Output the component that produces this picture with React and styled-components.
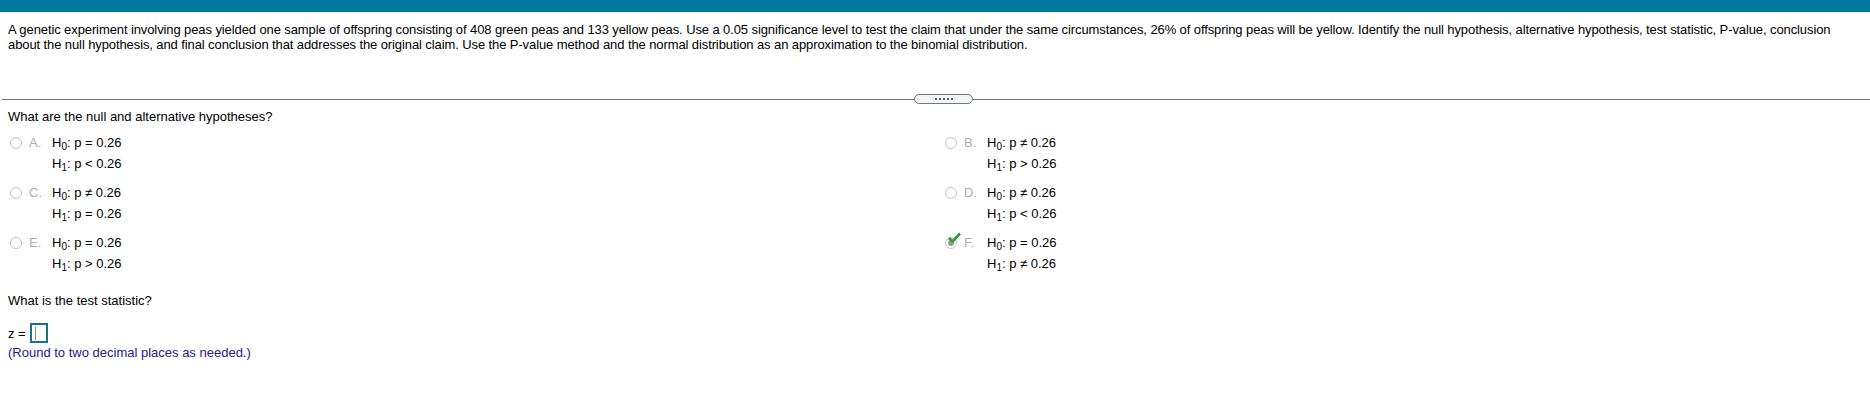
import React from "react";
import styled, { createGlobalStyle } from "styled-components";

const GlobalStyle = createGlobalStyle`
  body {
    margin: 0;
    background: #fff;
    font-family: "Liberation Sans", Arial, sans-serif;
    font-size: 13px;
    color: #000;
  }
`;

const Page = styled.div`
  width: 1870px;
  height: 416px;
  overflow: hidden;
`;

const TopBar = styled.div`
  height: 12px;
  background: #00789b;
`;

const Prompt = styled.p`
  margin: 0;
  padding: 10px 8px 0;
  line-height: 15px;
  letter-spacing: -0.1px;
`;

const DividerRow = styled.div`
  display: flex;
  align-items: center;
  height: 10px;
  margin-top: 42px;
  padding-left: 2px;
`;

const Line = styled.div`
  height: 1px;
  background: #6e7580;
  flex: ${(p) => (p.$grow ? 1 : "none")};
  width: ${(p) => (p.$w ? `${p.$w}px` : "auto")};
`;

const Pill = styled.button`
  width: 59px;
  height: 10px;
  padding: 0;
  border: 1px solid #6e7580;
  border-radius: 5px;
  background: #f2f4f7;
  display: flex;
  align-items: center;
  justify-content: center;
  gap: 2px;
`;

const Dot = styled.span`
  width: 2px;
  height: 2px;
  background: #5a616b;
`;

const Question = styled.div`
  padding-left: 8px;
  line-height: 15px;
  margin-top: ${(p) => p.$mt}px;
`;

const OptionsGrid = styled.div`
  display: grid;
  grid-template-columns: 935px 935px;
  row-gap: 8px;
  margin-top: 8px;
`;

const Option = styled.div`
  display: flex;
  align-items: flex-start;
  padding-left: 10px;
`;

const RadioWrap = styled.div`
  position: relative;
  width: 12px;
  height: 12px;
  margin-top: 5px;
  margin-right: 7px;
`;

const Radio = styled.div`
  width: 12px;
  height: 12px;
  box-sizing: border-box;
  border-radius: 50%;
  border: 1px solid #c3c3c3;
  background: #fff;
  display: flex;
  align-items: center;
  justify-content: center;

  &::after {
    content: "";
    display: ${(p) => (p.$checked ? "block" : "none")};
    width: 6px;
    height: 6px;
    border-radius: 50%;
    background: #9a9a9a;
  }
`;

const Check = styled.svg`
  position: absolute;
  left: 3px;
  top: -5px;
  width: 13px;
  height: 11px;
`;

const Letter = styled.span`
  width: 23px;
  line-height: 21px;
  color: #aeaeae;
`;

const Lines = styled.div`
  display: flex;
  flex-direction: column;
`;

const HLine = styled.div`
  line-height: 21px;
  height: 21px;
  white-space: nowrap;
`;

const Sub = styled.sub`
  font-size: 10px;
  vertical-align: -3px;
  line-height: 0;
`;

const AnswerRow = styled.div`
  display: flex;
  align-items: center;
  padding-left: 8px;
  margin-top: 15px;
  height: 20px;
`;

const InputBox = styled.div`
  width: 18px;
  height: 20px;
  box-sizing: border-box;
  margin-left: 4px;
  border: 2px solid #1f6f8b;
  display: flex;
  align-items: center;
  padding-left: 3px;
`;

const Caret = styled.div`
  width: 1px;
  height: 13px;
  background: #7a8a99;
`;

const Hint = styled.div`
  padding-left: 8px;
  margin-top: 2px;
  line-height: 15px;
  color: #25208f;
`;

const options = [
  { id: "A", h0: "p = 0.26", h1: "p < 0.26" },
  { id: "B", h0: "p ≠ 0.26", h1: "p > 0.26" },
  { id: "C", h0: "p ≠ 0.26", h1: "p = 0.26" },
  { id: "D", h0: "p ≠ 0.26", h1: "p < 0.26" },
  { id: "E", h0: "p = 0.26", h1: "p > 0.26" },
  { id: "F", h0: "p = 0.26", h1: "p ≠ 0.26", checked: true },
];

export default function App() {
  return (
    <Page>
      <GlobalStyle />
      <TopBar />
      <Prompt>
        A genetic experiment involving peas yielded one sample of offspring consisting of 408 green peas and 133 yellow peas. Use a 0.05 significance level to test the claim that under the same circumstances, 26% of offspring peas will be yellow. Identify the null hypothesis, alternative hypothesis, test statistic, P-value, conclusion about the null hypothesis, and final conclusion that addresses the original claim. Use the P-value method and the normal distribution as an approximation to the binomial distribution.
      </Prompt>

      <DividerRow>
        <Line $w={912} />
        <Pill>
          <Dot />
          <Dot />
          <Dot />
          <Dot />
          <Dot />
        </Pill>
        <Line $grow />
      </DividerRow>

      <Question $mt={5}>What are the null and alternative hypotheses?</Question>

      <OptionsGrid>
        {options.map((o) => (
          <Option key={o.id}>
            <RadioWrap>
              <Radio $checked={o.checked} />
              {o.checked && (
                <Check viewBox="0 0 13 11">
                  <path d="M1 6 L4.5 9.5 L12 1.5" fill="none" stroke="#2e9b3a" strokeWidth="2.6" strokeLinejoin="round" />
                </Check>
              )}
            </RadioWrap>
            <Letter>{o.id}.</Letter>
            <Lines>
              <HLine>
                H<Sub>0</Sub>: {o.h0}
              </HLine>
              <HLine>
                H<Sub>1</Sub>: {o.h1}
              </HLine>
            </Lines>
          </Option>
        ))}
      </OptionsGrid>

      <Question $mt={19}>What is the test statistic?</Question>

      <AnswerRow>
        z =
        <InputBox>
          <Caret />
        </InputBox>
      </AnswerRow>
      <Hint>(Round to two decimal places as needed.)</Hint>
    </Page>
  );
}
